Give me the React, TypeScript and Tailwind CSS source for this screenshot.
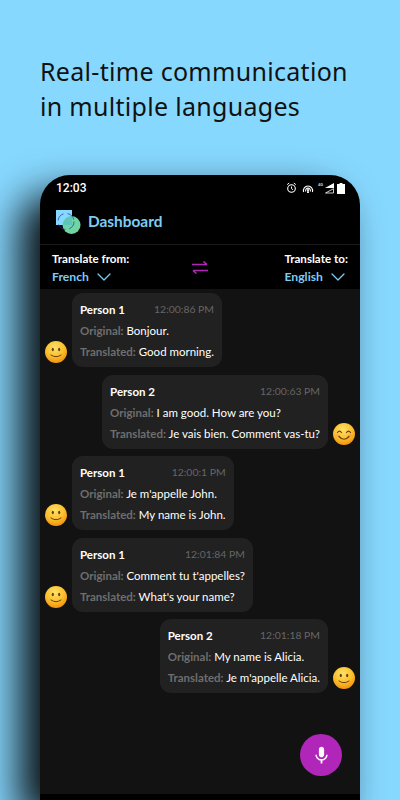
import { ChevronDown } from 'lucide-react';
import { MdMic } from 'react-icons/md';

interface Message {
  name: string;
  time: string;
  original: string;
  translated: string;
  mine?: boolean;
  smile?: boolean;
}

const messages: Message[] = [
  { name: 'Person 1', time: '12:00:86 PM', original: 'Bonjour.', translated: 'Good morning.' },
  { name: 'Person 2', time: '12:00:63 PM', original: 'I am good. How are you?', translated: 'Je vais bien. Comment vas-tu?', mine: true, smile: true },
  { name: 'Person 1', time: '12:00:1 PM', original: "Je m'appelle John.", translated: 'My name is John.' },
  { name: 'Person 1', time: '12:01:84 PM', original: "Comment tu t'appelles?", translated: "What's your name?" },
  { name: 'Person 2', time: '12:01:18 PM', original: 'My name is Alicia.', translated: "Je m'appelle Alicia.", mine: true },
];

function Emoji({ smile }: { smile?: boolean }) {
  return (
    <svg width="22" height="22" viewBox="0 0 22 22" className="shrink-0">
      <defs>
        <radialGradient id="face" cx="45%" cy="30%" r="75%">
          <stop offset="0%" stopColor="#fde26a" />
          <stop offset="55%" stopColor="#fbbf2c" />
          <stop offset="100%" stopColor="#f08a0c" />
        </radialGradient>
      </defs>
      <circle cx="11" cy="11" r="11" fill="url(#face)" />
      {smile ? (
        <>
          <path d="M4.5 9.5q2-2.6 4 0M13.5 9.5q2-2.6 4 0" fill="none" stroke="#6b3d10" strokeWidth="1.2" strokeLinecap="round" />
          <ellipse cx="5" cy="12.5" rx="2" ry="1.2" fill="#f6926a" opacity="0.6" />
          <ellipse cx="17" cy="12.5" rx="2" ry="1.2" fill="#f6926a" opacity="0.6" />
          <path d="M6 13.5q5 5.5 10 0" fill="none" stroke="#6b3d10" strokeWidth="1.2" strokeLinecap="round" />
        </>
      ) : (
        <>
          <ellipse cx="7.8" cy="8.5" rx="1.1" ry="1.7" fill="#6b3d10" />
          <ellipse cx="14.2" cy="8.5" rx="1.1" ry="1.7" fill="#6b3d10" />
          <path d="M6 14q5 3.6 10 0" fill="none" stroke="#6b3d10" strokeWidth="1" strokeLinecap="round" />
        </>
      )}
    </svg>
  );
}

function Bubble({ m }: { m: Message }) {
  return (
    <div className="h-[74px] rounded-[11px] bg-[#212121] px-2 pt-[6px] text-[11.5px] leading-[21px] text-white">
      <div className="flex h-[21px] justify-between gap-[15px]">
        <span className="font-bold">{m.name}</span>
        <span className="text-[10.4px] leading-[21px] text-[#666666]">{m.time}</span>
      </div>
      <div className="whitespace-nowrap">
        <span className="font-bold text-[#6e6e6e]">Original:</span> {m.original}
      </div>
      <div className="whitespace-nowrap">
        <span className="font-bold text-[#6e6e6e]">Translated:</span> {m.translated}
      </div>
    </div>
  );
}

function ChatRow({ m }: { m: Message }) {
  if (m.mine) {
    return (
      <div className="flex items-end justify-end gap-[5px] pr-[5px]">
        <Bubble m={m} />
        <div className="pb-[4px]">
          <Emoji smile={m.smile} />
        </div>
      </div>
    );
  }
  return (
    <div className="flex items-end gap-[5px] pl-[5px]">
      <div className="pb-[4px]">
        <Emoji />
      </div>
      <Bubble m={m} />
    </div>
  );
}

function StatusIcons() {
  return (
    <svg width="72" height="14" viewBox="0 0 72 14" fill="none">
      {/* alarm */}
      <circle cx="17.5" cy="7.5" r="3.8" stroke="white" strokeWidth="1.1" />
      <path d="M17.5 5.5v2.2l1.4 1M13.2 3.6l2-1.6M21.8 3.6l-2-1.6" stroke="white" strokeWidth="1" />
      {/* hotspot */}
      <path d="M29.6 11a4.6 4.6 0 1 1 8.8 0M31.8 10.5a2.4 2.4 0 1 1 4.4 0" stroke="white" strokeWidth="1.1" />
      <circle cx="34" cy="9" r="1" fill="white" />
      <path d="M33.5 9h1l.5 3h-2z" fill="white" />
      {/* 4G */}
      <text x="44" y="5" fontSize="4" fontWeight="700" fill="#cccccc" fontFamily="Roboto, sans-serif">4G</text>
      {/* signal bars */}
      <path d="M51 7l9-5v5z" fill="white" />
      <path d="M51.5 12l8-4.300v4.300z" stroke="white" strokeWidth="0.8" />
      <path d="M63 3h2.500V2h3v1H71v10h-8z" fill="white" />
    </svg>
  );
}

function Logo() {
  return (
    <svg width="26" height="26" viewBox="0 0 26 26" className="mt-[3px] shrink-0">
      <rect x="0" y="0" width="16" height="15" fill="#87d8ff" />
      <circle cx="15.500" cy="15" r="9" fill="#6fd6a3" />
      <path d="M16 6A9 9 0 0 0 7 15h9z" fill="#5cc6bb" />
      <circle cx="10" cy="11.500" r="8" fill="none" stroke="#2a2ab0" strokeWidth="0.7" strokeDasharray="9 4" />
    </svg>
  );
}

export default function App() {
  return (
    <div className="h-[800px] w-[400px] overflow-hidden bg-[#87d8ff] font-['Lato',sans-serif]">
      <h1 className="h-[175px] pl-10 pt-[54px] font-['Noto_Sans',sans-serif] text-[25px] leading-[35px] tracking-[0.3px] text-[#111111]">
        Real-time communication
        <br />
        in multiple languages
      </h1>

      <div className="relative ml-10 flex h-[625px] w-80 flex-col overflow-hidden rounded-t-[30px] bg-black shadow-[-20px_20px_40px_rgba(0,0,0,0.95)]">
        <div className="flex h-[24px] shrink-0 items-center justify-between pl-4 pr-[14px] pt-[1px] font-['Roboto',sans-serif] text-[12px] font-medium text-white">
          <span>12:03</span>
          <StatusIcons />
        </div>

        <div className="flex h-[46px] shrink-0 items-center gap-[6px] border-b border-[#1a1a1a] pl-4">
          <Logo />
          <span className="pt-[1px] text-[15.4px] font-bold text-[#7ccdf5]">Dashboard</span>
        </div>

        <div className="grid h-[44px] shrink-0 grid-cols-3 items-center px-3 pt-[1px]">
          <div className="justify-self-start text-[11.6px] leading-[18px]">
            <div className="font-bold text-white">Translate from:</div>
            <div className="flex items-center text-[12.2px] font-bold text-[#7ccdf5]">
              French
              <ChevronDown size={24} strokeWidth={1.25} className="-my-1 ml-[3px]" />
            </div>
          </div>
          <svg width="16" height="13" viewBox="0 0 16 13" fill="none" stroke="#b026b8" strokeWidth="1.6" className="justify-self-center">
            <path d="M0 3.500h15M11.500 0.500l3.500 3M16 9.500H1M4.500 12.500L1 9.500" />
          </svg>
          <div className="justify-self-end text-[11.6px] leading-[18px]">
            <div className="font-bold text-white">Translate to:</div>
            <div className="flex items-center text-[12.2px] font-bold text-[#7ccdf5]">
              English
              <ChevronDown size={24} strokeWidth={1.25} className="-my-1 ml-[3px] -mr-[2px]" />
            </div>
          </div>
        </div>

        <div className="flex flex-1 flex-col gap-[7.5px] bg-[#121212] pt-[4px]">
          {messages.map((m, i) => (
            <ChatRow key={i} m={m} />
          ))}
        </div>

        <div className="h-[6px] shrink-0 bg-black" />

        <button className="absolute bottom-[24px] right-[18px] flex h-[42px] w-[42px] items-center justify-center rounded-full bg-[#b026b8] text-white">
          <MdMic size={21} />
        </button>
      </div>
    </div>
  );
}
